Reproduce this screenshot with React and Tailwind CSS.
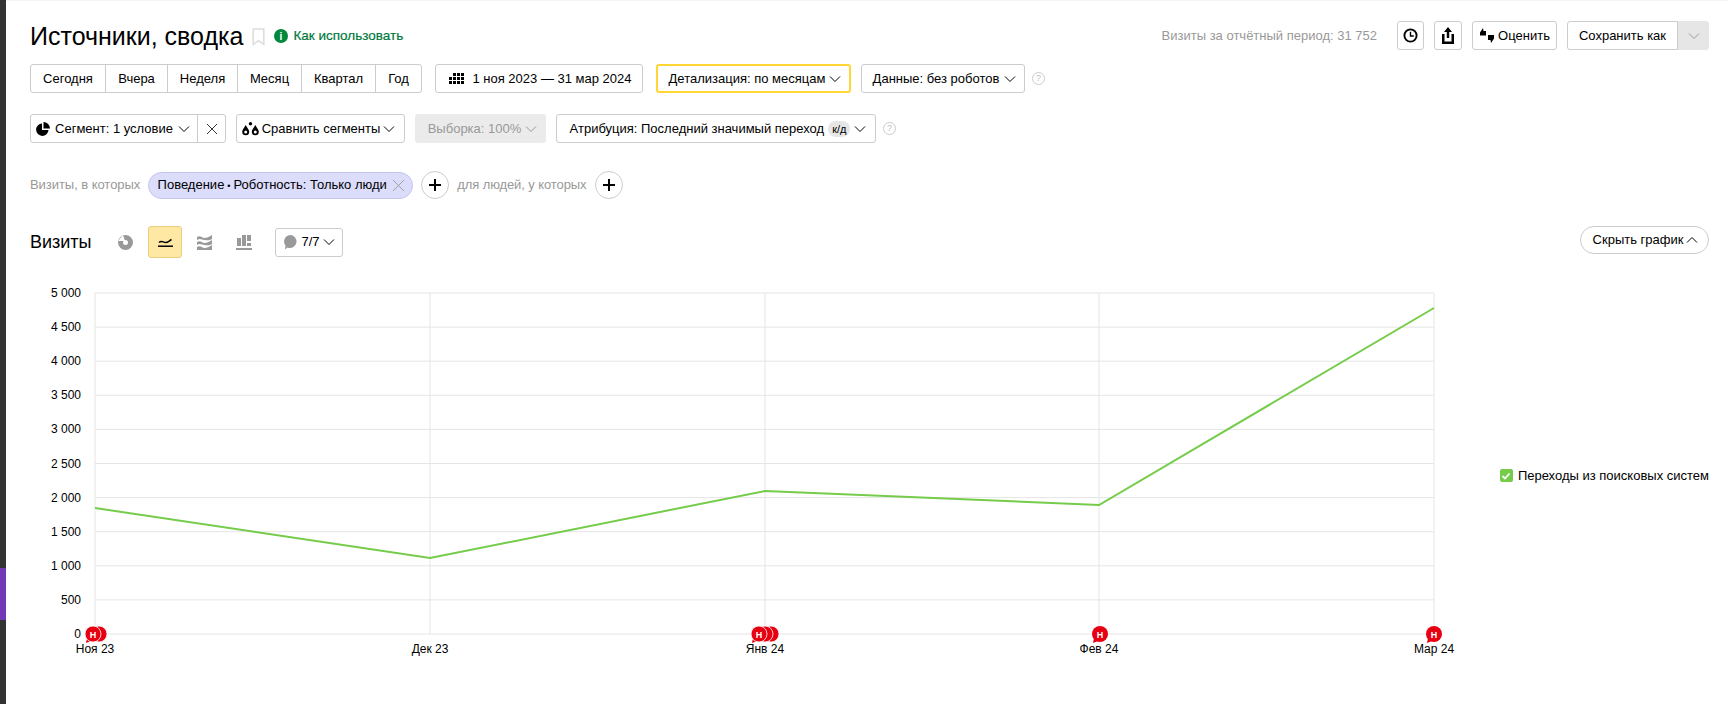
const Chevron = ({ up = false, className = 'w-[12px] h-[12px]' }) => (
  <svg viewBox="0 0 12 12" className={className} fill="none" stroke="currentColor" strokeWidth="1">
    <path d={up ? 'M1 8.500 6 3.500l5 5' : 'M1 3.500l5 5 5-5'} />
  </svg>
);

const Help = () => (
  <span className="w-[13px] h-[13px] rounded-full border border-[#ccc] text-[#bbb] text-[9px] leading-[11px] text-center shrink-0">?</span>
);

const Btn = ({ className = '', children }) => (
  <div className={`h-[29px] flex items-center border border-[#ccc] rounded-[3px] bg-white whitespace-nowrap ${className}`}>{children}</div>
);

const Plus = ({ className }) => (
  <div className={`w-[28px] h-[28px] rounded-full border border-[#ccc] flex items-center justify-center shrink-0 ${className}`}>
    <svg viewBox="0 0 12 12" className="w-[12px] h-[12px]" stroke="#000" strokeWidth="2"><path d="M6 0v12M0 6h12" /></svg>
  </div>
);

const Drop = ({ x, y }) => (
  <g>
    <path d={`M${x} ${y}c-1.500 3-3.500 4.500-3.500 6.800a3.500 3.500 0 0 0 7 0c0-2.300-2-3.800-3.500-6.800z`} fill="#000" />
    <circle cx={x} cy={y + 7} r="1.500" fill="#fff" />
  </g>
);

const periods = [
  ['Сегодня', 'w-[74px]'],
  ['Вчера', 'w-[62px]'],
  ['Неделя', 'w-[70px]'],
  ['Месяц', 'w-[64px]'],
  ['Квартал', 'w-[74px]'],
  ['Год', 'w-[46px]'],
];

const yLabels = ['5 000', '4 500', '4 000', '3 500', '3 000', '2 500', '2 000', '1 500', '1 000', '500', '0'];
const xTicks = [
  [95, 'Ноя 23'],
  [430, 'Дек 23'],
  [765, 'Янв 24'],
  [1099, 'Фев 24'],
  [1434, 'Мар 24'],
];
const line = '95,507 430,557 765,490 1099,504 1434,307';

// annotation bubbles on the zero line: [x, how many stacked]
const markers = [
  [93, 2],
  [759, 3],
  [1100, 1],
  [1434, 1],
];

const Marker = ({ x, n }) => (
  <g>
    {Array.from({ length: n - 1 }).map((_, i) => (
      <circle key={i} cx={x + 6 + (n - 2 - i) * 6} cy="633" r="8" fill="#e60012" stroke="#fff" strokeWidth="0.8" />
    ))}
    <path d={`M${x - 6} 637l-1 5 5-2z`} fill="#e60012" />
    <circle cx={x} cy="633" r="8" fill="#e60012" stroke="#fff" strokeWidth={n > 1 ? 0.8 : 0} />
    <text x={x} y="636.500" textAnchor="middle" fontSize="9" fontWeight="700" fill="#fff">Н</text>
  </g>
);

const Chart = () => (
  <svg viewBox="30 280 1430 380" className="w-[1430px] h-[380px] shrink-0">
    {yLabels.map((label, i) => {
      const y = 292 + i * 34.1;
      return (
        <g key={label}>
          <line x1="95" x2="1434" y1={y} y2={y} stroke="#e5e5e5" />
          <text x="81" y={y + 4} textAnchor="end" fontSize="12" fill="#000">{label}</text>
        </g>
      );
    })}
    {xTicks.map(([x, label]) => (
      <g key={label}>
        <line x1={x} x2={x} y1="292" y2="633" stroke="#e5e5e5" />
        <text x={x} y="652" textAnchor="middle" fontSize="12" fill="#000">{label}</text>
      </g>
    ))}
    <polyline points={line} fill="none" stroke="#75cc4b" strokeWidth="2" />
    {markers.map(([x, n]) => <Marker key={x} x={x} n={n} />)}
  </svg>
);

export default function App() {
  return (
    <div className="flex w-[1729px] h-[704px] overflow-hidden bg-white text-black text-[13px] font-['Liberation_Sans',Arial,sans-serif]">
      {/* dark rail on the left edge */}
      <div className="w-[6px] bg-[#333] flex flex-col shrink-0">
        <div className="h-[568px]" />
        <div className="h-[52px] bg-[#7139b8]" />
      </div>

      <div className="flex-1 pl-[24px] pr-[20px] border-t border-[#f4f4f4]">
        {/* header */}
        <div className="flex items-start justify-between pt-[20px] h-[63px]">
          <div className="flex items-center h-[30px]">
            <h1 className="text-[25px] leading-[30px] font-normal">Источники, сводка</h1>
            <svg viewBox="0 0 12 17" className="w-[13px] h-[18px] ml-[9px] mt-[2px]" fill="none" stroke="#ddd" strokeWidth="1.500"><path d="M1 1h10v14.500L6 12l-5 3.500z" /></svg>
            <svg viewBox="0 0 14 14" className="w-[14px] h-[14px] ml-[9px]"><circle cx="7" cy="7" r="7" fill="#00893d" /><text x="7" y="11" textAnchor="middle" fontSize="10" fontWeight="700" fill="#fff">i</text></svg>
            <span className="ml-[5px] text-[#00793a] text-[13.500px] [-webkit-text-stroke:0.2px_#00793a]">Как использовать</span>
          </div>
          <div className="flex items-center">
            <span className="text-[#999] text-[13px] mr-[20px]">Визиты за отчётный период: 31 752</span>
            <Btn className="w-[27px] justify-center">
              <svg viewBox="0 0 16 16" className="w-[15px] h-[15px]" fill="none" stroke="#000" strokeWidth="2"><circle cx="8" cy="8" r="6.500" /><path d="M8 4v4.500h3.500" strokeWidth="1.500" /></svg>
            </Btn>
            <Btn className="w-[28px] justify-center ml-[10px]">
              <svg viewBox="0 0 14 17" className="w-[14px] h-[17px]" fill="#000"><path d="M7 0l4 5H8.200v6H5.800V5H3z" /><path d="M1 7h2.500v7.500h7V7H13v10H1z" /></svg>
            </Btn>
            <Btn className="w-[85px] justify-center ml-[10px] gap-[3px]">
              <svg viewBox="0 0 16 15" className="w-[16px] h-[15px]" fill="#000"><path d="M1 4.500 4 0l.5 3H7v4.500H1z" /><path d="M15 7v3.500L12 15l-.5-3H9V7z" /></svg>
              <span>Оценить</span>
            </Btn>
            <Btn className="w-[111px] justify-center ml-[10px] rounded-r-none">Сохранить как</Btn>
            <div className="w-[31px] h-[29px] bg-[#e6e6e6] rounded-r-[3px] flex items-center justify-center text-[#999]"><Chevron /></div>
          </div>
        </div>

        {/* period row */}
        <div className="flex items-center">
          <div className="flex h-[29px] border border-[#ccc] rounded-[3px]">
            {periods.map(([label, w], i) => (
              <div key={label} className={`${w} flex items-center justify-center ${i > 0 ? 'border-l border-[#ccc]' : ''}`}>{label}</div>
            ))}
          </div>
          <Btn className="w-[208px] justify-center ml-[13px] pl-[3px] gap-[8px]">
            <svg viewBox="0 0 15 11" className="w-[15px] h-[11px]" fill="#000">
              {[0, 1, 2].map((r) => [0, 1, 2, 3].map((c) => (r === 0 && c === 0 ? null : <rect key={`${r}${c}`} x={c * 4} y={r * 4} width="3" height="3" />)))}
            </svg>
            <span>1 ноя 2023 — 31 мар 2024</span>
          </Btn>
          <Btn className="w-[195px] justify-center ml-[13px] pl-[3px] gap-[4px] !border-2 !border-[#ffd633]">
            <span>Детализация: по месяцам</span><Chevron />
          </Btn>
          <Btn className="w-[164px] justify-center ml-[10px] pl-[3px] gap-[5px]">
            <span>Данные: без роботов</span><Chevron />
          </Btn>
          <span className="ml-[7px] flex"><Help /></span>
        </div>

        {/* segment row */}
        <div className="flex items-center mt-[21px]">
          <div className="flex h-[29px] border border-[#ccc] rounded-[3px]">
            <div className="w-[166px] pr-[2px] flex items-center justify-center gap-[5px]">
              <svg viewBox="0 0 14 14" className="w-[14px] h-[14px]" fill="#000"><path d="M6 1.500a6.200 6.200 0 1 0 6.500 6.500H6z" /><path d="M7.500 0A6.500 6.500 0 0 1 14 6.500H7.500z" /></svg>
              <span>Сегмент: 1 условие</span><Chevron />
            </div>
            <div className="w-[28px] flex items-center justify-center border-l border-[#ccc]">
              <svg viewBox="0 0 12 12" className="w-[12px] h-[12px]" stroke="#333" strokeWidth="1"><path d="M1 1l10 10M11 1 1 11" /></svg>
            </div>
          </div>
          <Btn className="w-[169px] justify-center ml-[10px] pr-[4px] gap-[3px]">
            <svg viewBox="0 0 17 14" className="w-[17px] h-[14px]">
              <Drop x={3.700} y={3} />
              <Drop x={13.300} y={3} />
              <circle cx="8.500" cy="1.800" r="1.700" fill="#000" />
            </svg>
            <span>Сравнить сегменты</span><Chevron />
          </Btn>
          <div className="w-[131px] h-[29px] ml-[10px] pl-[4px] bg-[#ebebeb] rounded-[3px] flex items-center justify-center gap-[4px] text-[#999]">
            <span>Выборка: 100%</span><Chevron />
          </div>
          <Btn className="w-[320px] justify-center ml-[10px] pl-[4px] gap-[4px]">
            <span>Атрибуция: Последний значимый переход</span>
            <span className="bg-[#e6e6e6] rounded-[8px] px-[4px] text-[11px] leading-[16px]">к/д</span>
            <Chevron />
          </Btn>
          <span className="ml-[7px] flex"><Help /></span>
        </div>

        {/* filter row */}
        <div className="flex items-center mt-[28px]">
          <span className="text-[#999] tracking-[-0.05px]">Визиты, в которых</span>
          <div className="ml-[8px] h-[27px] w-[265px] bg-[#dcdcfb] border border-[#c4c4ee] rounded-[14px] flex items-center justify-center gap-[6px]">
            <span>Поведение<span className="text-[9px] mx-[3px]">•</span>Роботность: Только люди</span>
            <svg viewBox="0 0 10 10" className="w-[11px] h-[11px]" stroke="#999" strokeWidth="0.800"><path d="M0 0l10 10M10 0 0 10" /></svg>
          </div>
          <Plus className="ml-[8px]" />
          <span className="ml-[8px] text-[#999] tracking-[-0.1px]">для людей, у которых</span>
          <Plus className="ml-[9px]" />
        </div>

        {/* chart toolbar */}
        <div className="flex items-center justify-between mt-[27px] h-[32px]">
          <div className="flex items-center">
            <span className="text-[18px] w-[88px]">Визиты</span>
            <svg viewBox="0 0 15 15" className="w-[15px] h-[15px]"><path fillRule="evenodd" d="M7.500 0a7.500 7.500 0 1 1-7.500 7.500A7.500 7.500 0 0 1 7.500 0zm0 5a2.500 2.500 0 1 0 2.500 2.500A2.500 2.500 0 0 0 7.500 5z" fill="#999" /><path d="M0 6l5-6 2 6z" fill="#fff" /></svg>
            <div className="w-[34px] h-[32px] ml-[15px] bg-[#ffe8a3] border border-[#e8cf80] rounded-[3px] flex items-center justify-center">
              <svg viewBox="0 0 15 10" className="w-[15px] h-[10px]" fill="none" stroke="#000" strokeWidth="1.500"><path d="M0 9.200h15" /><path d="M1 5.500c3-2.500 4 0 6.500 0s3.500-1.500 6-3" /></svg>
            </div>
            <svg viewBox="0 0 15 15" className="w-[15px] h-[15px] ml-[15px]" fill="#999"><path d="M0 2c3-2 5 1 7.500 1S12 2 15 0v4c-3 2-5 1-7.500 1S3 3 0 5z" /><path d="M0 7c3-2 5 1 7.500 1S12 7 15 5v4c-3 2-5 1-7.500 1S3 8 0 10z" /><path d="M0 12c3-2 5 1 7.500 1S12 12 15 10v5H0z" /></svg>
            <svg viewBox="0 0 16 15" className="w-[16px] h-[15px] ml-[24px]" fill="#999"><rect x="1" y="3" width="4" height="8" /><rect x="6" y="0" width="4" height="11" /><rect x="11" y="0" width="4" height="6" /><rect x="11" y="8" width="4" height="3" /><rect x="0" y="13" width="16" height="2" /></svg>
            <Btn className="w-[68px] justify-center ml-[23px] gap-[3px]">
              <svg viewBox="0 0 14 15" className="w-[14px] h-[15px]" fill="#999"><path d="M7 0a6.500 6.500 0 1 1-2.500 12.500L2 14.500l.5-4A6.500 6.500 0 0 1 7 0z" /></svg>
              <span className="ml-[1px]">7/7</span><Chevron />
            </Btn>
          </div>
          <div className="w-[129px] h-[28px] pl-[2px] border border-[#ccc] rounded-[14px] flex items-center justify-center gap-[3px] self-start">
            <span>Скрыть график</span><Chevron up />
          </div>
        </div>

        {/* chart with legend */}
        <div className="flex mt-[23px]">
          <Chart />
          <div className="flex-1 flex items-start justify-end pt-[185px]">
            <div className="flex items-center gap-[5px] whitespace-nowrap">
              <span className="w-[13px] h-[13px] rounded-[2px] bg-[#75cc4b] flex items-center justify-center">
                <svg viewBox="0 0 10 10" className="w-[10px] h-[10px]" fill="none" stroke="#fff" strokeWidth="1.800"><path d="M1.500 5l2.500 2.500 4.500-5" /></svg>
              </span>
              <span>Переходы из поисковых систем</span>
            </div>
          </div>
        </div>
      </div>
    </div>
  );
}
